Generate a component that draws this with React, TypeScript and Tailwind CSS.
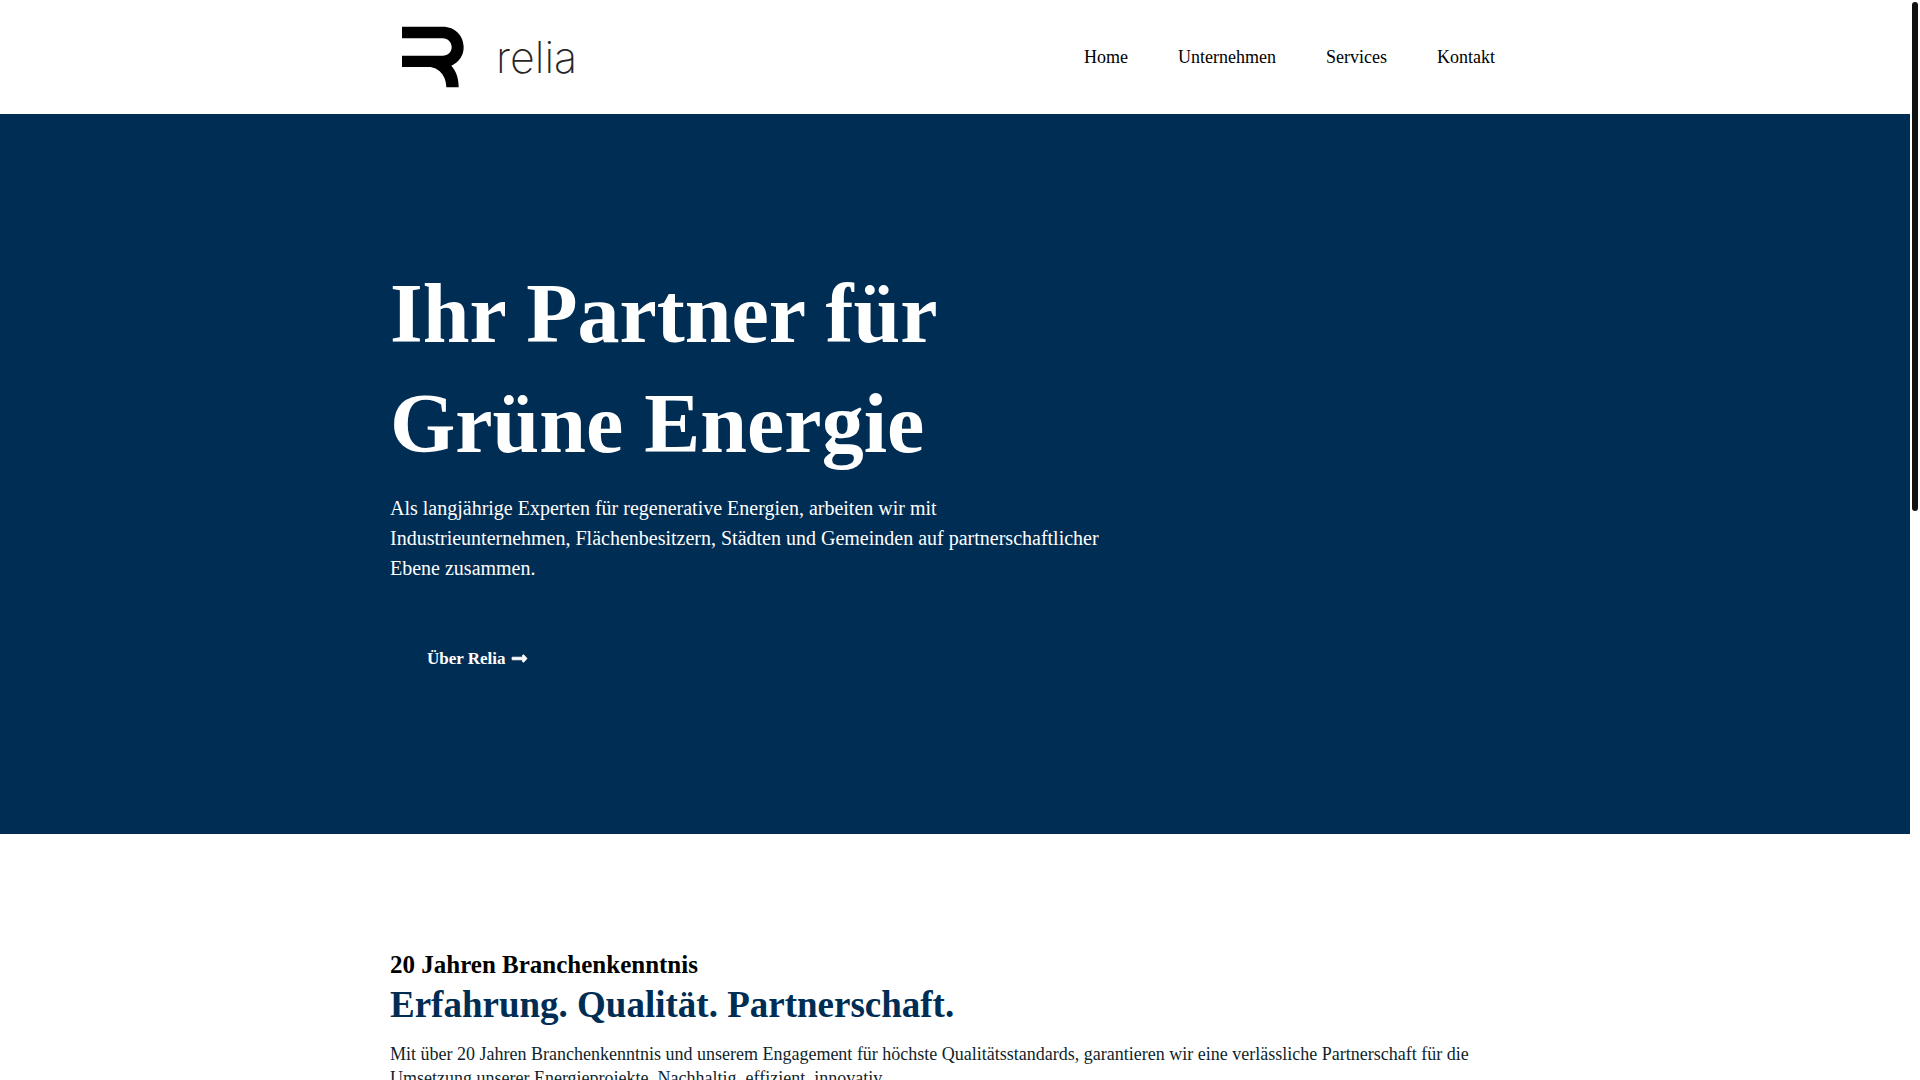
import { FaLongArrowAltRight } from "react-icons/fa";

const navItems = ["Home", "Unternehmen", "Services", "Kontakt"];

function Logo() {
  return (
    <a href="#home" aria-label="relia" className="flex items-center pl-3">
      <svg viewBox="65 78 186 186" className="size-[62px]" aria-hidden="true">
        <path d="M65 80H187C225 80 250 107 250 142C250 167 236 187 213 197C228 214 235 235 235 262H198C198 228 175 201 145 201H65V167H187C203 167 214 156 214 142C214 127 203 115 187 115H65Z" />
      </svg>
      <span className="ml-8 font-[Inter,sans-serif] text-[43px] leading-none font-extralight text-neutral-800">
        relia
      </span>
    </a>
  );
}

function Header() {
  return (
    <header className="bg-white">
      <div className="mx-auto flex h-[114px] max-w-[1130px] items-center justify-between">
        <Logo />
        <nav className="flex">
          {navItems.map((item) => (
            <a key={item} href={"#" + item.toLowerCase()} className="px-[25px] text-lg text-black">
              {item}
            </a>
          ))}
        </nav>
      </div>
    </header>
  );
}

function Hero() {
  return (
    <section className="flex min-h-[720px] items-center bg-[#002d54] pt-0.5 text-white">
      <div className="mx-auto w-full max-w-[1130px]">
        <h1 className="text-[84px] leading-[110px] font-bold">
          Ihr Partner für
          <br />
          Grüne Energie
        </h1>
        <p className="mt-3.5 max-w-[725px] text-xl leading-[30px]">
          Als langjährige Experten für regenerative Energien, arbeiten wir mit Industrieunternehmen,
          Flächenbesitzern, Städten und Gemeinden auf partnerschaftlicher Ebene zusammen.
        </p>
        <a href="#unternehmen" className="mt-[43px] inline-flex items-center gap-[5px] px-[37px] py-5 text-[17px] font-bold">
          Über Relia
          <FaLongArrowAltRight stroke="currentColor" strokeWidth={24} aria-hidden="true" />
        </a>
      </div>
    </section>
  );
}

function Intro() {
  return (
    <section className="bg-white pt-[114px]">
      <div className="mx-auto max-w-[1130px]">
        <h3 className="text-[25px] leading-[34px] font-bold text-black">20 Jahren Branchenkenntnis</h3>
        <h2 className="text-[37px] leading-[46px] font-bold text-[#002d54]">Erfahrung. Qualität. Partnerschaft.</h2>
        <p className="mt-3.5 text-lg leading-6 text-[#0f1f2b]">
          Mit über 20 Jahren Branchenkenntnis und unserem Engagement für höchste Qualitätsstandards, garantieren
          wir eine verlässliche Partnerschaft für die Umsetzung unserer Energieprojekte. Nachhaltig, effizient,
          innovativ.
        </p>
      </div>
    </section>
  );
}

export default function App() {
  return (
    <div className="flex h-screen overflow-hidden bg-white font-['Liberation_Serif',serif]">
      <main className="min-w-0 flex-1">
        <Header />
        <Hero />
        <Intro />
      </main>
      <div className="w-[10px] shrink-0 px-[2px] pt-[2px]" aria-hidden="true">
        <div className="h-[509px] rounded-full bg-[#111111]" />
      </div>
    </div>
  );
}
